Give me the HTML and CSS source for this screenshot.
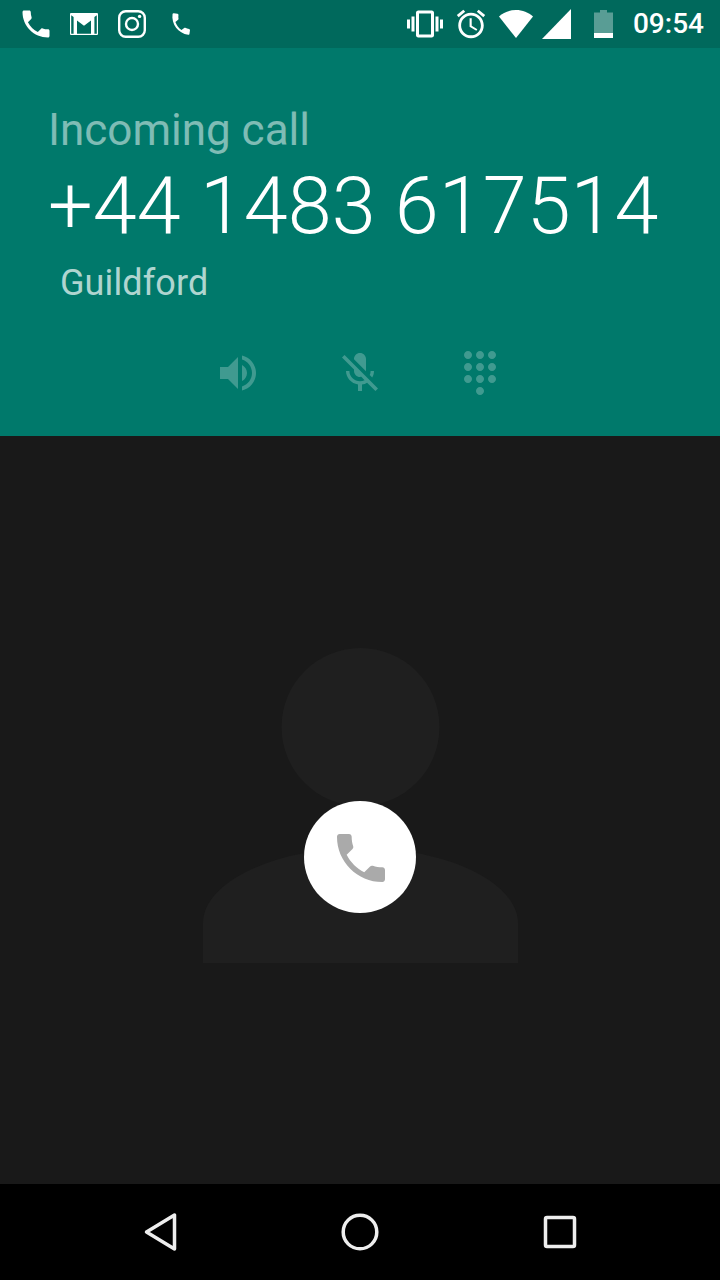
FILE: index.html
```html
<!DOCTYPE html>
<html lang="en">
<head>
<meta charset="utf-8">
<title>Incoming call</title>
<link rel="stylesheet" href="styles.css">
</head>
<body>
<div class="screen">
  <header class="status">
    <div class="status-left">
      <svg class="ic36" viewBox="0 0 24 24"><path class="w" d="M6.62 10.79c1.44 2.83 3.76 5.14 6.59 6.59l2.2-2.2c.27-.27.67-.36 1.02-.24 1.12.37 2.33.57 3.57.57.55 0 1 .45 1 1V20c0 .55-.45 1-1 1-9.39 0-17-7.61-17-17 0-.55.45-1 1-1h3.5c.55 0 1 .45 1 1 0 1.25.2 2.45.57 3.57.11.35.03.74-.25 1.02l-2.2 2.2z"/></svg>
      <svg class="gmail" viewBox="0 0 28 22"><path class="w" fill-rule="evenodd" d="M1 0h26a1 1 0 0 1 1 1v20a1 1 0 0 1-1 1H1a1 1 0 0 1-1-1V1a1 1 0 0 1 1-1zM1.200 2.200v18.600h2.400V4zM24.400 4v16.800h2.400V2.200zM7 7.600v13.200h14V7.600l-7 5.200z"/></svg>
      <svg class="insta" viewBox="0 0 28 28"><rect class="ln" x="1.200" y="1.200" width="25.600" height="25.600" rx="6.500"/><circle class="ln" cx="14" cy="14" r="6"/><circle class="w" cx="21.600" cy="6.400" r="1.700"/></svg>
      <svg class="small-phone" viewBox="0 0 24 24"><path class="w" transform="rotate(8 12 12)" d="M6.62 10.79c1.44 2.83 3.76 5.14 6.59 6.59l2.2-2.2c.27-.27.67-.36 1.02-.24 1.12.37 2.33.57 3.57.57.55 0 1 .45 1 1V20c0 .55-.45 1-1 1-9.39 0-17-7.61-17-17 0-.55.45-1 1-1h3.5c.55 0 1 .45 1 1 0 1.25.2 2.45.57 3.57.11.35.03.74-.25 1.02l-2.2 2.2z"/></svg>
    </div>
    <div class="status-right">
      <svg class="ic36" viewBox="0 0 24 24"><path class="w" d="M0 15h2V9H0v6zm3 2h2V7H3v10zm19-8v6h2V9h-2zm-3 8h2V7h-2v10zM16.5 3h-9C6.67 3 6 3.67 6 4.5v15c0 .83.67 1.5 1.5 1.5h9c.83 0 1.5-.67 1.5-1.5v-15c0-.83-.67-1.5-1.5-1.5zM16 19H8V5h8v14z"/></svg>
      <svg class="alarm" viewBox="0 0 24 24"><path class="w" d="M22 5.72l-4.6-3.86-1.29 1.53 4.6 3.86L22 5.72zM7.88 3.39L6.6 1.86 2 5.71l1.29 1.53 4.59-3.85zM12.5 8H11v6l4.75 2.85.75-1.23-4-2.37V8zM12 4c-4.97 0-9 4.03-9 9s4.03 9 9 9 9-4.03 9-9-4.03-9-9-9zm0 16c-3.87 0-7-3.13-7-7s3.13-7 7-7 7 3.13 7 7-3.13 7-7 7z"/></svg>
      <svg class="wifi" viewBox="0 0 34 28"><path class="w" d="M0 6.500C4.500 2.500 10.500 0 17 0s12.500 2.500 17 6.500L17 28z"/></svg>
      <svg class="signal" viewBox="0 0 29 30"><path class="w" d="M0 30L29 0v30z"/></svg>
      <svg class="battery" viewBox="0 0 19 28"><path class="w dim" d="M6 0h7v2.500h6V23H0V2.500h6z"/><path class="w" d="M0 23h19v5H0z"/></svg>
      <span class="time">09:54</span>
    </div>
  </header>

  <section class="call">
    <div class="call-label">Incoming call</div>
    <div class="call-number">+44 1483 617514</div>
    <div class="call-place">Guildford</div>
    <div class="call-actions">
      <svg class="action" viewBox="1 0 24 24"><path d="M3 9v6h4l5 5V4L7 9H3zm13.500 3c0-1.770-1.020-3.290-2.500-4.030v8.050c1.480-.73 2.500-2.250 2.500-4.020zM14 3.230v2.060c2.890.86 5 3.540 5 6.710s-2.110 5.850-5 6.710v2.060c4.010-.91 7-4.490 7-8.770s-2.990-7.860-7-8.770z"/></svg>
      <svg class="action" viewBox="0 0 24 24"><path d="M19 11h-1.700c0 .74-.16 1.430-.43 2.050l1.230 1.230c.56-.98.9-2.090.9-3.280zm-4.020.17c0-.06.02-.11.02-.17V5c0-1.660-1.340-3-3-3S9 3.340 9 5v.18l5.980 5.990zM4.270 3L3 4.270l6.010 6.010V11c0 1.660 1.330 3 2.990 3 .22 0 .44-.03.65-.08l1.660 1.660c-.71.33-1.500.52-2.310.52-2.760 0-5.300-2.100-5.300-5.100H5c0 3.410 2.720 6.230 6 6.720V21h2v-3.280c.91-.13 1.770-.45 2.540-.9L19.730 21 21 19.730 4.270 3z"/></svg>
      <svg class="action" viewBox="0 0 24 24"><path d="M12 19c-1.100 0-2 .9-2 2s.9 2 2 2 2-.9 2-2-.9-2-2-2zM6 1c-1.100 0-2 .9-2 2s.9 2 2 2 2-.9 2-2-.9-2-2-2zm0 6c-1.100 0-2 .9-2 2s.9 2 2 2 2-.9 2-2-.9-2-2-2zm0 6c-1.100 0-2 .9-2 2s.9 2 2 2 2-.9 2-2-.9-2-2-2zm12-8c1.100 0 2-.9 2-2s-.9-2-2-2-2 .9-2 2 .9 2 2 2zm-6 8c-1.100 0-2 .9-2 2s.9 2 2 2 2-.9 2-2-.9-2-2-2zm6 0c-1.100 0-2 .9-2 2s.9 2 2 2 2-.9 2-2-.9-2-2-2zm0-6c-1.100 0-2 .9-2 2s.9 2 2 2 2-.9 2-2-.9-2-2-2zm-6 0c-1.100 0-2 .9-2 2s.9 2 2 2 2-.9 2-2-.9-2-2-2zm0-6c-1.100 0-2 .9-2 2s.9 2 2 2 2-.9 2-2-.9-2-2-2z"/></svg>
    </div>
  </section>

  <main class="stage">
    <div class="avatar">
      <svg class="silhouette" viewBox="0 0 315 315"><circle cx="157.500" cy="79" r="79"/><path d="M0 315V275C0 235 70 200 157.500 200S315 235 315 275V315z"/></svg>
      <div class="answer">
        <svg class="answer-icon" viewBox="0 0 24 24"><path d="M6.620 10.790c1.440 2.830 3.760 5.140 6.590 6.590l2.200-2.200c.27-.27.67-.36 1.020-.24 1.120.37 2.330.57 3.570.57.55 0 1 .45 1 1V20c0 .55-.45 1-1 1-9.390 0-17-7.610-17-17 0-.55.45-1 1-1h3.500c.55 0 1 .45 1 1 0 1.250.2 2.450.57 3.570.11.35.03.74-.25 1.020l-2.200 2.200z"/></svg>
      </div>
    </div>
  </main>

  <nav class="nav">
    <svg class="nav-icon" viewBox="0 0 40 40"><path class="nl" d="M6.500 20L34.500 3V37z"/></svg>
    <svg class="nav-icon" viewBox="0 0 40 40"><circle class="nl" cx="20" cy="20" r="16.800"/></svg>
    <svg class="nav-icon" viewBox="0 0 40 40"><rect class="nl" x="5.500" y="5.500" width="29" height="29" rx="1.500"/></svg>
  </nav>
</div>
</body>
</html>
```

FILE: styles.css
```css
* { box-sizing: border-box; }
html, body { margin: 0; padding: 0; }
body { background: #191919; font-family: Roboto, "Liberation Sans", sans-serif; }
svg { display: block; flex: none; }

.screen { width: 720px; height: 1280px; display: flex; flex-direction: column; overflow: hidden; }

.status { height: 48px; flex: none; background: #00695c; display: flex; justify-content: space-between; align-items: center; padding: 0 16px 0 18px; }
.status-left, .status-right { display: flex; align-items: center; }
.w { fill: #fff; }
.dim { opacity: .35; }
.ln { fill: none; stroke: #fff; stroke-width: 2.400; }
.ic36 { width: 36px; height: 36px; }
.gmail { width: 28px; height: 22px; margin-left: 16px; }
.insta { width: 28px; height: 28px; margin-left: 20px; }
.small-phone { width: 26px; height: 26px; margin-left: 22px; }
.alarm { width: 34px; height: 34px; margin-left: 11px; }
.wifi { width: 34px; height: 28px; margin-left: 11px; }
.signal { width: 29px; height: 30px; margin-left: 9px; }
.battery { width: 19px; height: 28px; margin-left: 23px; }
.time { color: #fff; font-size: 28px; font-weight: 500; line-height: 36px; margin-left: 20px; }

.call { height: 388px; flex: none; background: #00796b; padding-top: 56px; display: flex; flex-direction: column; }
.call-label { font-size: 44px; line-height: 52px; font-weight: 400; color: rgba(255,255,255,.5); padding-left: 48px; }
.call-number { font-size: 79.200px; line-height: 96px; font-weight: 300; color: #fff; padding-left: 48px; margin-top: 2px; white-space: nowrap; }
.call-place { font-size: 36px; line-height: 50px; font-weight: 400; color: rgba(255,255,255,.7); padding-left: 60px; margin-top: 4px; letter-spacing: .1px; }
.call-actions { display: flex; justify-content: center; gap: 72px; margin-top: 41px; }
.action { width: 48px; height: 48px; fill: rgba(255,255,255,.25); }

.stage { flex: 1; background: #191919; display: flex; justify-content: center; padding-top: 212px; }
.avatar { position: relative; width: 315px; height: 315px; }
.silhouette { width: 315px; height: 315px; fill: #1f1f1f; }
.answer { position: absolute; left: 101.500px; top: 153px; width: 112px; height: 112px; border-radius: 50%; background: #fff; display: flex; align-items: center; justify-content: center; padding: 2px 0 0 1px; }
.answer-icon { width: 64px; height: 64px; fill: #aaa; }

.nav { height: 96px; flex: none; background: #000; display: grid; grid-template-columns: repeat(3, 1fr); padding: 0 60px; align-items: center; justify-items: center; }
.nav-icon { width: 40px; height: 40px; }
.nl { fill: none; stroke: #eee; stroke-width: 3.500; stroke-linejoin: round; }
```
